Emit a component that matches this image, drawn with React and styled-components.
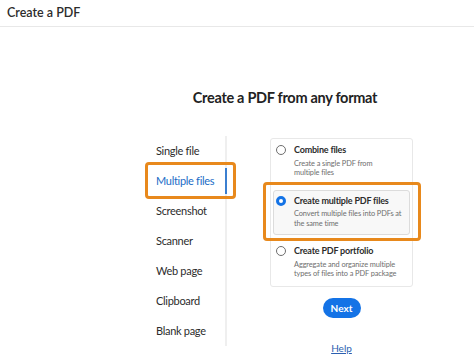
import styled, { createGlobalStyle } from 'styled-components';

const GlobalStyle = createGlobalStyle`
  body {
    margin: 0;
    background: #fff;
    font-family: 'Lato', 'Noto Sans', sans-serif;
    color: #2c2c2c;
  }
`;

const navItems = ['Single file', 'Multiple files', 'Screenshot', 'Scanner', 'Web page', 'Clipboard', 'Blank page'];

const options = [
  { title: 'Combine files', desc: ['Create a single PDF from', 'multiple files'] },
  { title: 'Create multiple PDF files', desc: ['Convert multiple files into PDFs at', 'the same time'], selected: true },
  { title: 'Create PDF portfolio', desc: ['Aggregate and organize multiple', 'types of files into a PDF package'] },
];

function App() {
  return (
    <Page>
      <GlobalStyle />
      <Header>Create a PDF</Header>
      <Main>
        <Heading>Create a PDF from any format</Heading>
        <Body>
          <Nav>
            {navItems.map((item) => (
              <NavItem key={item} $active={item === 'Multiple files'}>
                {item}
              </NavItem>
            ))}
          </Nav>
          <RightCol>
            <Card>
              {options.map((opt) => (
                <Option key={opt.title} $selected={opt.selected}>
                  <Radio $checked={opt.selected} />
                  <OptionText>
                    <OptionTitle>{opt.title}</OptionTitle>
                    {opt.desc.map((line) => (
                      <OptionDesc key={line}>{line}</OptionDesc>
                    ))}
                  </OptionText>
                </Option>
              ))}
            </Card>
            <NextButton type="button">Next</NextButton>
            <HelpLink href="#">Help</HelpLink>
          </RightCol>
        </Body>
      </Main>
    </Page>
  );
}

const Page = styled.div`
  width: 474px;
  height: 358px;
  overflow: hidden;
`;

const Header = styled.div`
  height: 27px;
  box-sizing: border-box;
  padding: 5px 0 0 7px;
  font-size: 12.5px;
  font-weight: 600;
  border-bottom: 1px solid #e8e8e8;
`;

const Main = styled.div`
  width: 280px;
  margin-left: 145px;
  display: flex;
  flex-direction: column;
`;

const Heading = styled.h1`
  margin: 61px 0 0;
  text-align: center;
  font-size: 14.5px;
  letter-spacing: -0.3px;
  font-weight: 700;
  line-height: 20px;
  color: #222;
`;

const Body = styled.div`
  display: flex;
  margin-top: 26px;
`;

const Nav = styled.div`
  width: 80px;
  border-right: 2px solid #efefef;
  height: 210px;
  margin-top: 2px;
`;

const NavItem = styled.div`
  position: relative;
  height: 30px;
  line-height: 30px;
  padding-left: 11px;
  font-size: 11px;
  letter-spacing: -0.3px;
  color: ${(p) => (p.$active ? '#1a6bc6' : '#2c2c2c')};

  ${(p) =>
    p.$active &&
    `
    &::after {
      content: '';
      position: absolute;
      right: -2px;
      top: 2px;
      bottom: 2px;
      width: 2px;
      background: #3b7fd0;
    }
    &::before {
      content: '';
      position: absolute;
      left: 0;
      right: -11px;
      top: -4px;
      bottom: -3px;
      border: 3px solid #e8891c;
      border-radius: 4px;
    }
  `}
`;

const RightCol = styled.div`
  margin-left: 43px;
  margin-top: 4px;
  display: flex;
  flex-direction: column;
  align-items: center;
`;

const Card = styled.div`
  width: 143px;
  box-sizing: border-box;
  border: 1px solid #e8e8e8;
  border-radius: 3px;
  padding: 0 2px;
  display: flex;
  flex-direction: column;
  gap: 5px;
`;

const Option = styled.div`
  position: relative;
  display: flex;
  gap: 8px;
  padding: 4px 4px 6px 2px;
  border: 1px solid ${(p) => (p.$selected ? '#dcdcdc' : 'transparent')};
  border-radius: 3px;
  background: ${(p) => (p.$selected ? '#f8f8f8' : 'transparent')};

  ${(p) =>
    p.$selected &&
    `
    &::before {
      content: '';
      position: absolute;
      left: -11px;
      right: -12px;
      top: -9px;
      bottom: -7px;
      border: 3px solid #e8891c;
      border-radius: 4px;
    }
  `}
`;

const Radio = styled.span`
  flex: none;
  width: 10px;
  height: 10px;
  margin-top: 1px;
  box-sizing: border-box;
  border-radius: 50%;
  border: ${(p) => (p.$checked ? '3px solid #1473e6' : '1px solid #6e6e6e')};
  background: #fff;
`;

const OptionText = styled.div`
  display: flex;
  flex-direction: column;
  white-space: nowrap;
`;

const OptionTitle = styled.div`
  font-size: 9px;
  letter-spacing: -0.2px;
  font-weight: 700;
  line-height: 12px;
  margin-bottom: 2.5px;
`;

const OptionDesc = styled.div`
  font-size: 7.4px;
  letter-spacing: -0.1px;
  line-height: 9.5px;
  color: #6e6e6e;
`;

const NextButton = styled.button`
  margin-top: 11px;
  width: 38px;
  height: 20px;
  border: none;
  border-radius: 10px;
  background: #1473e6;
  color: #fff;
  font-family: inherit;
  font-size: 10px;
  font-weight: 700;
  padding: 0;
`;

const HelpLink = styled.a`
  margin-top: 24px;
  font-size: 10px;
  color: #2b5fb0;
  text-decoration: underline;
`;

export default App;
